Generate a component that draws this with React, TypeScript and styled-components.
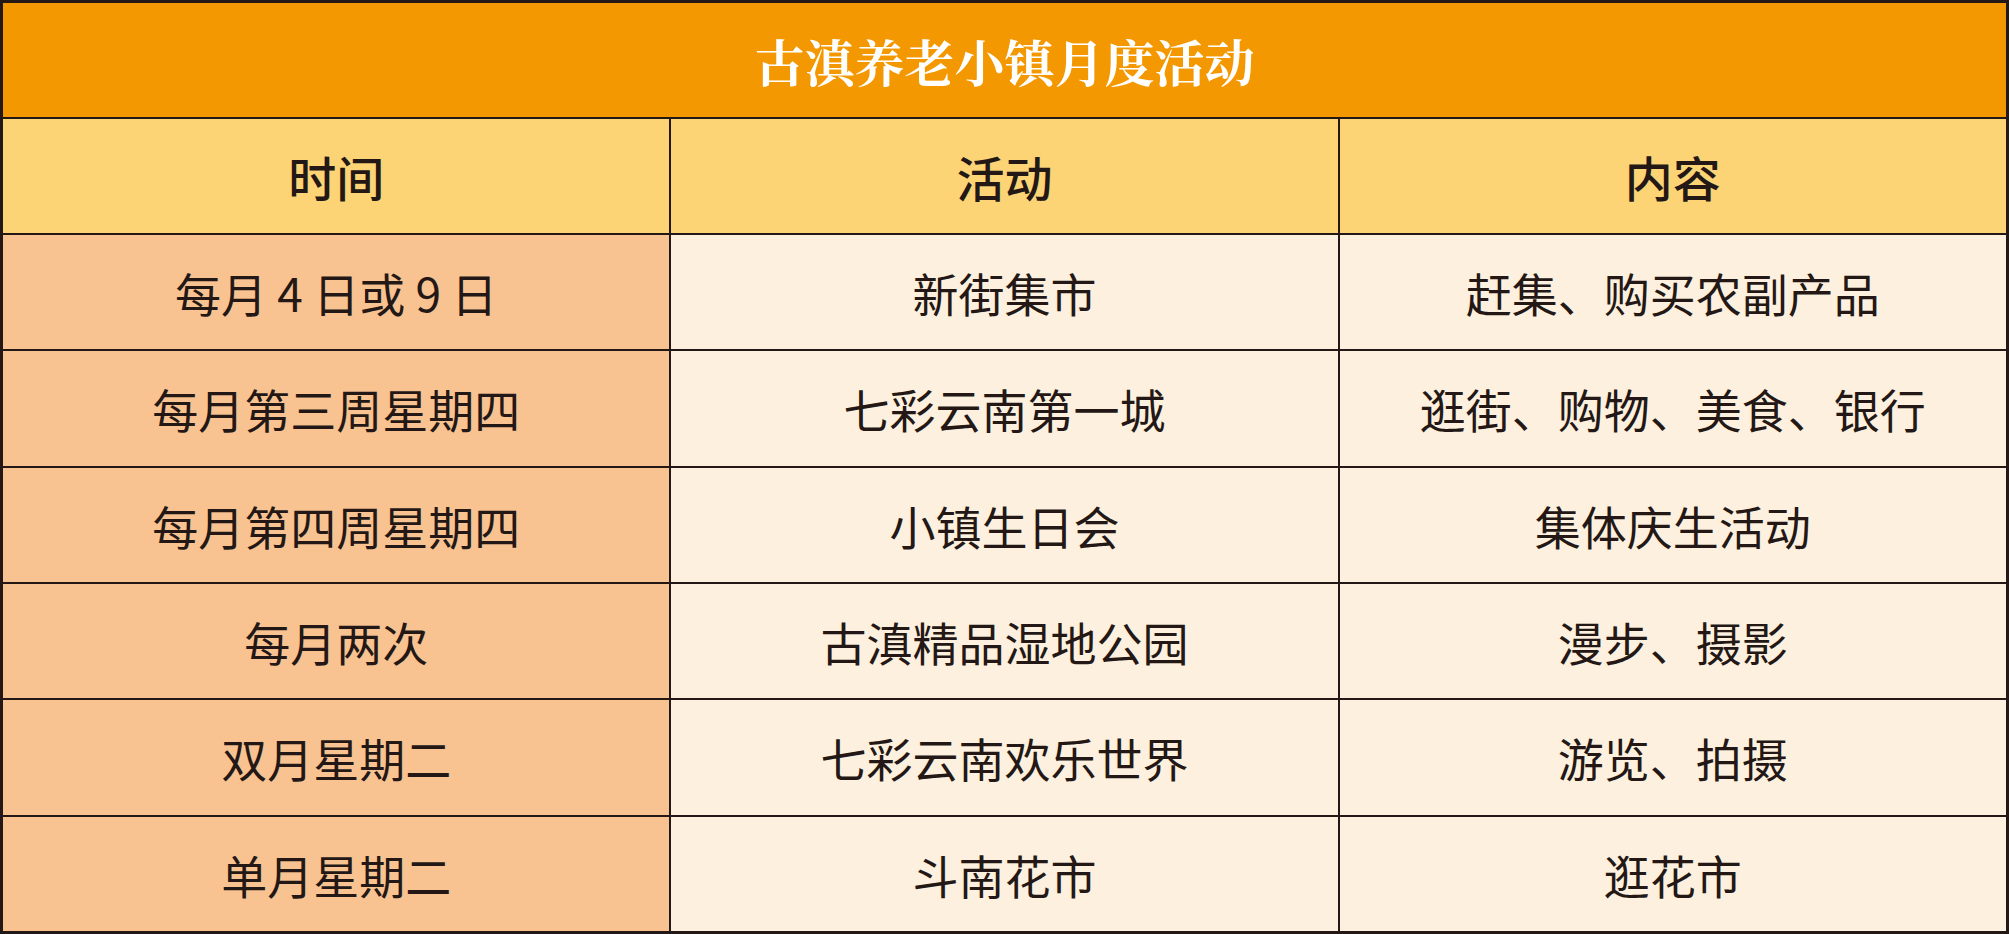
import React from 'react';
import styled, {createGlobalStyle} from 'styled-components';

const GlobalStyle = createGlobalStyle`
  html, body {
    margin: 0;
    padding: 0;
    background: #ffffff;
  }
  body {
    font-family: "Noto Sans CJK SC", "Noto Sans", sans-serif;
  }
`

const Table = styled.div`
  box-sizing: border-box;
  width: 2009px;
  height: 934px;
  display: grid;
  grid-template-columns: repeat(3, 1fr);
  grid-template-rows: 114px 114px repeat(6, 1fr);
  gap: 2px;
  border: 3px solid #231815;
  background: #231815;
`

const Title = styled.div`
  grid-column: 1 / span 3;
  display: flex;
  align-items: center;
  justify-content: center;
  background: #f39800;
  color: #ffffff;
  font-family: "Noto Serif CJK SC", "Noto Sans CJK SC", serif;
  font-weight: 700;
  font-size: 50px;
`

const HeadCell = styled.div`
  display: flex;
  align-items: center;
  justify-content: center;
  background: #fcd475;
  color: #231815;
  font-size: 48px;
  font-weight: 500;
`

const Cell = styled.div<{$first?: boolean}>`
  display: flex;
  align-items: center;
  justify-content: center;
  background: ${p => p.$first ? '#f9c391' : '#fef0de'};
  color: #231815;
  font-size: 46px;
  font-weight: 400;
  white-space: pre;
`

const columns = ['时间', '活动', '内容']

const rows = [
  ['每月 4 日或 9 日', '新街集市', '赶集、购买农副产品'],
  ['每月第三周星期四', '七彩云南第一城', '逛街、购物、美食、银行'],
  ['每月第四周星期四', '小镇生日会', '集体庆生活动'],
  ['每月两次', '古滇精品湿地公园', '漫步、摄影'],
  ['双月星期二', '七彩云南欢乐世界', '游览、拍摄'],
  ['单月星期二', '斗南花市', '逛花市'],
]

function App() {
  return (
    <>
      <GlobalStyle/>
      <Table>
        <Title>古滇养老小镇月度活动</Title>
        {columns.map(c => <HeadCell key={c}>{c}</HeadCell>)}
        {rows.map(row => row.map((text, i) =>
          <Cell key={row[0] + i} $first={i === 0}>{text}</Cell>
        ))}
      </Table>
    </>
  );
}

export default App;
